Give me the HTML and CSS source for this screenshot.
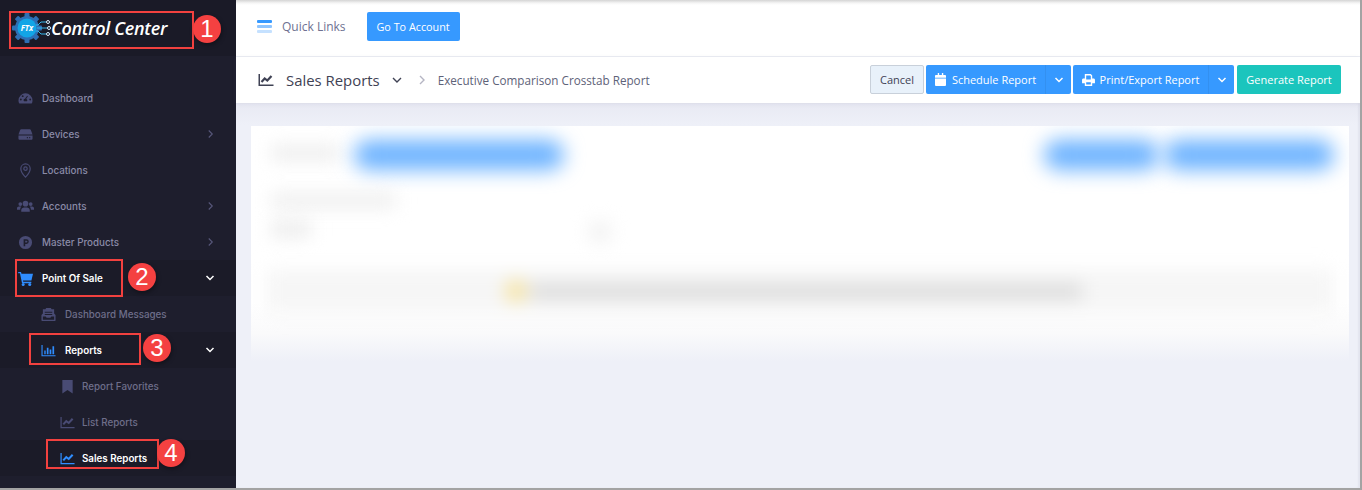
FILE: index.html
```html
<!DOCTYPE html>
<html lang="en">
<head>
<meta charset="utf-8">
<title>Sales Reports</title>
<link rel="stylesheet" href="styles.css">
</head>
<body>
<div class="window">
  <aside class="sidebar">
    <div class="brand">
      <svg class="logo-mark" width="40" height="36" viewBox="0 0 40 36">
        <g fill="#2d6fb5">
          <circle cx="16" cy="17" r="12"/>
          <rect x="13.500" y="2" width="5" height="30" rx="1"/>
          <rect x="1" y="14.500" width="30" height="5" rx="1"/>
          <rect x="13.500" y="2" width="5" height="30" rx="1" transform="rotate(45 16 17)"/>
          <rect x="13.500" y="2" width="5" height="30" rx="1" transform="rotate(-45 16 17)"/>
        </g>
        <circle cx="16" cy="17" r="9.500" fill="#12a5e6"/>
        <g stroke="#35b5ea" stroke-width="1" fill="none">
          <path d="M25 14h2l3-3h5"/><path d="M26 17h10"/><path d="M25 20h2l3 3h5"/>
        </g>
        <g fill="#1a1a27" stroke="#d8f1ff" stroke-width="1">
          <circle cx="37" cy="11" r="1.500"/><circle cx="38" cy="17" r="1.500"/><circle cx="37" cy="23" r="1.500"/>
        </g>
        <text x="16" y="20" class="logo-ftx" text-anchor="middle">FTx</text>
      </svg>
      <span class="brand-name">Control Center</span>
    </div>
    <nav class="menu">
      <a class="item">
        <svg class="ico" viewBox="0 0 16 16"><path class="fill-dim" d="M8 2.500a7.500 7.500 0 0 0-7.500 7.500c0 1.300.3 2.300.9 3.300h13.200c.6-1 .9-2 .9-3.300A7.500 7.500 0 0 0 8 2.500zM3 10a1 1 0 1 1 0-2 1 1 0 0 1 0 2zm2-3.500a1 1 0 1 1 0-2 1 1 0 0 1 0 2zM9.500 11h-3a1.500 1.500 0 0 1 .9-2.700L9.800 5l.8.500-1.900 3a1.500 1.500 0 0 1 .8 2.500zM13 10a1 1 0 1 1 0-2 1 1 0 0 1 0 2z"/></svg>
        <span>Dashboard</span>
      </a>
      <a class="item">
        <svg class="ico" viewBox="0 0 16 16"><path class="fill-dim" d="M3.500 2.500h9c.6 0 1 .3 1.200.8L15.500 8h-15l1.800-4.700c.2-.5.600-.8 1.200-.8zM.500 9h15v3.500c0 .6-.4 1-1 1h-13c-.6 0-1-.4-1-1zm12 1.700a.7.700 0 1 0 0 1.400.7.700 0 0 0 0-1.400zm-2.500 0a.7.700 0 1 0 0 1.400.7.700 0 0 0 0-1.400z"/></svg>
        <span>Devices</span>
        <svg class="caret" viewBox="0 0 8 10"><path d="M2 1l4 4-4 4"/></svg>
      </a>
      <a class="item">
        <svg class="ico" viewBox="0 0 16 16"><path class="line-dim" d="M8 15S3 9.800 3 6a5 5 0 0 1 10 0c0 3.800-5 9-5 9z"/><circle class="line-dim" cx="8" cy="6" r="1.800"/></svg>
        <span>Locations</span>
      </a>
      <a class="item">
        <svg class="ico wide" viewBox="0 0 18 14"><g class="fill-dim"><circle cx="9" cy="4.500" r="3"/><circle cx="3.500" cy="5" r="2"/><circle cx="14.500" cy="5" r="2"/><path d="M4.500 13v-1.500C4.500 9.500 6 8.500 7.500 8.500h3c1.500 0 3 1 3 3V13zM0 11V9.500C0 8.300 1 7.500 2 7.500h2.500C3.700 8.300 3.300 9.500 3.300 11zM18 11V9.500c0-1.200-1-2-2-2h-2.500c.8.800 1.200 2 1.200 3.500z"/></g></svg>
        <span>Accounts</span>
        <svg class="caret" viewBox="0 0 8 10"><path d="M2 1l4 4-4 4"/></svg>
      </a>
      <a class="item">
        <svg class="ico" viewBox="0 0 16 16"><path class="fill-dim" fill-rule="evenodd" d="M8 1a7 7 0 1 1 0 14A7 7 0 0 1 8 1zM6 4.500V12h1.700V9.500H9a2.500 2.500 0 0 0 0-5zm1.700 1.500H9a1 1 0 0 1 0 2H7.700z"/></svg>
        <span>Master Products</span>
        <svg class="caret" viewBox="0 0 8 10"><path d="M2 1l4 4-4 4"/></svg>
      </a>
      <a class="item active">
        <svg class="ico" viewBox="0 0 16 16"><path class="fill-blue" d="M.200 1h3l.5 2H16l-1.700 7.200H5.300l.3 1.300h8.600v1.500H4.300L2.100 2.500H.200z"/><circle class="fill-blue" cx="5.500" cy="14.300" r="1.600"/><circle class="fill-blue" cx="12.500" cy="14.300" r="1.600"/></svg>
        <span>Point Of Sale</span>
        <svg class="chev" viewBox="0 0 10 8"><path d="M1.500 2l3.500 3.500L8.500 2"/></svg>
      </a>
      <a class="item sub">
        <svg class="ico" viewBox="0 0 16 16"><path class="fill-dim" fill-rule="evenodd" d="M5.500 1h5l.8 1.500H14V7l1.500 1.500V14c0 .6-.4 1-1 1h-13c-.6 0-1-.4-1-1V8.500L2 7V2.500h2.700zM4 5v1h8V5zm0 2.500v1h8v-1zM2 10v3.500h12V10h-3l-1 1.500H6L5 10z"/></svg>
        <span>Dashboard Messages</span>
      </a>
      <a class="item sub current">
        <svg class="ico" viewBox="0 0 16 16"><path class="fill-blue" d="M.500 2h1.200v11h13.800v1.200H.500zM3.500 8h1.500v4H3.500zM6.200 5H8v7H6.200zM9.200 7H11v5H9.200zM12.200 3.500H14V12h-1.800z"/></svg>
        <span class="strong">Reports</span>
        <svg class="chev" viewBox="0 0 10 8"><path d="M1.500 2l3.500 3.500L8.500 2"/></svg>
      </a>
      <a class="item subsub">
        <svg class="ico" viewBox="0 0 16 16"><path class="fill-dim" d="M2.500 1h11v14.500L8 11.700l-5.500 3.800z"/></svg>
        <span>Report Favorites</span>
      </a>
      <a class="item subsub">
        <svg class="ico" viewBox="0 0 16 16"><path class="fill-dim" d="M.500 2h1.300v10.700h13.700V14H.500z"/><path class="line-dim thick" d="M3.500 10l3.200-3.500 2.600 2L13.500 4"/></svg>
        <span>List Reports</span>
      </a>
      <a class="item subsub current">
        <svg class="ico" viewBox="0 0 16 16"><path class="fill-blue" d="M.500 2h1.300v10.700h13.700V14H.500z"/><path class="line-blue thick" d="M3.500 10l3.200-3.500 2.600 2L13.500 4"/></svg>
        <span class="strong">Sales Reports</span>
      </a>
    </nav>
  </aside>

  <main class="main">
    <header class="topbar">
      <svg class="quick-ico" viewBox="0 0 15 13"><rect y="0" width="15" height="3" rx="1" fill="#3699ff"/><rect y="5" width="15" height="3" rx="1" fill="#8fc5ff"/><rect y="10" width="15" height="3" rx="1" fill="#c5e1ff"/></svg>
      <span class="quick-label">Quick Links</span>
      <button class="btn blue go">Go To Account</button>
    </header>
    <section class="subheader">
      <svg class="title-ico" viewBox="0 0 16 16"><path d="M.500 2h1.500v10.500h13.500V14H.500z"/><path class="title-line" d="M3.500 10l3.200-3.500 2.600 2L13.500 4"/></svg>
      <h1 class="title">Sales Reports</h1>
      <svg class="title-chev" viewBox="0 0 10 8"><path d="M1 2l4 4 4-4"/></svg>
      <svg class="crumb-sep" viewBox="0 0 8 10"><path d="M2 1l4 4-4 4"/></svg>
      <span class="crumb">Executive Comparison Crosstab Report</span>
      <div class="actions">
        <button class="btn cancel">Cancel</button>
        <div class="split w-schedule">
          <button class="btn blue grow"><svg class="btn-ico" viewBox="0 0 12 14"><path d="M3 0h1.500v2h3V0H9v2h2c.6 0 1 .4 1 1v2H0V3c0-.6.4-1 1-1h2zM0 6h12v7c0 .6-.4 1-1 1H1c-.6 0-1-.4-1-1z"/></svg>Schedule Report</button>
          <button class="btn blue drop"><svg viewBox="0 0 10 8"><path d="M1.500 2l3.500 3.500L8.500 2"/></svg></button>
        </div>
        <div class="split w-print">
          <button class="btn blue grow"><svg class="btn-ico print" viewBox="0 0 14 13"><path fill-rule="evenodd" d="M3 0h6.500L11 1.500V5h1.500c.8 0 1.500.7 1.500 1.500V10h-3v3H3v-3H0V6.500C0 5.700.7 5 1.500 5H3zm1.500 1.500V6h5V2.300l-.8-.8zM4.500 9v2.500h5V9z"/></svg>Print/Export Report</button>
          <button class="btn blue drop"><svg viewBox="0 0 10 8"><path d="M1.500 2l3.500 3.500L8.500 2"/></svg></button>
        </div>
        <button class="btn teal">Generate Report</button>
      </div>
    </section>
    <section class="content">
      <div class="card">
        <div class="blur-row top">
          <div class="ghost label"></div>
          <div class="pill left"></div>
          <div class="spacer"></div>
          <div class="pill r1"></div>
          <div class="pill r2"></div>
        </div>
        <div class="blur-row mid">
          <div class="ghost-stack">
            <div class="ghost l1"></div>
            <div class="ghost l2"></div>
          </div>
          <div class="ghost dot"></div>
        </div>
        <div class="notice">
          <div class="warn"></div>
          <div class="notice-text"></div>
        </div>
      </div>
    </section>
  </main>

  <div class="mark box1"></div><div class="num n1">1</div>
  <div class="mark box2"></div><div class="num n2">2</div>
  <div class="mark box3"></div><div class="num n3">3</div>
  <div class="mark box4"></div><div class="num n4">4</div>
</div>
</body>
</html>
```

FILE: styles.css
```css
* { box-sizing: border-box; }
html, body { margin: 0; height: 100%; }
body { font-family: "Open Sans", "Liberation Sans", sans-serif; background: #fff; overflow: hidden; }

.window {
  position: relative;
  display: flex;
  width: 1362px;
  height: 490px;
  border-right: 2px solid #a3a3a3;
  border-bottom: 2px solid #a3a3a3;
  overflow: hidden;
}

/* Sidebar */
.sidebar { width: 236px; flex: none; background: #1e1e2d; display: flex; flex-direction: column; }
.brand { height: 56px; flex: none; background: #1a1a27; display: flex; align-items: center; padding: 0 0 0 11px; }
.logo-mark { flex: none; margin-top: 1px; }
.logo-ftx { font: italic 700 8px "Open Sans", sans-serif; fill: #fff; }
.brand-name { font: italic 600 18px "Open Sans", sans-serif; color: #fff; letter-spacing: -.3px; white-space: nowrap; }
.menu { padding-top: 24px; display: flex; flex-direction: column; }

.item { height: 36px; display: flex; align-items: center; padding: 0 22px 0 18px; color: #8b8ba8; font: 500 9.800px "Inter", "Open Sans", sans-serif; }
.item span { white-space: nowrap; }
.item.sub { padding-left: 41px; color: #6e6e8a; }
.item.subsub { padding-left: 60px; color: #6e6e8a; }
.item.active, .item.subsub.current { background: #1b1b28; color: #fff; font-weight: 600; }
.item.sub.current { background: #1b1b28; }
.strong { color: #fff; font-weight: 600; }
.ico { width: 15px; height: 15px; flex: none; margin-right: 9px; }
.ico.wide { width: 17px; height: 14px; margin-left: -1px; margin-right: 8px; }
.item.subsub .ico { margin-right: 7px; }
.fill-dim { fill: #494b74; }
.line-dim { fill: none; stroke: #494b74; stroke-width: 1.300; }
.fill-blue { fill: #2f8dff; }
.line-blue { fill: none; stroke: #2f8dff; }
.line-dim.thick, .line-blue.thick { stroke-width: 2.200; }
.caret { width: 7px; height: 10px; margin-left: auto; fill: none; stroke: #57577a; stroke-width: 1.300; }
.chev { width: 10px; height: 8px; margin-left: auto; margin-right: -1px; fill: none; stroke: #fff; stroke-width: 1.500; }

/* Main */
.main { flex: 1; min-width: 0; display: flex; flex-direction: column; background: #eef0f8; }
.topbar { height: 57px; flex: none; background: linear-gradient(#d4d4d4, #f5f5f5 3px, #fff 5px); border-bottom: 1px solid #ebedf3; display: flex; align-items: center; padding: 0 0 4px 21px; }
.quick-ico { width: 15px; height: 13px; flex: none; }
.quick-label { font-size: 12px; color: #6e7191; margin-left: 10px; margin-right: 21px; }
.btn { font: 400 11px "Open Sans", sans-serif; border: 0; border-radius: 2px; height: 29px; padding: 0; color: #fff; display: flex; align-items: center; justify-content: center; white-space: nowrap; }
.blue { background: #3699ff; }
.teal { background: #1bc5bd; width: 104px; margin-left: 1px; }
.go { width: 93px; font-size: 10.800px; }

.subheader { height: 46px; flex: none; background: #fff; display: flex; align-items: center; padding: 0 19px 1px 22px; box-shadow: 0 1px 4px rgba(120, 120, 160, .1); position: relative; }
.title-ico { width: 16px; height: 16px; flex: none; fill: #3f4254; }
.title-line { fill: none; stroke: #3f4254; stroke-width: 2.200; }
.title { margin: 0 0 0 12px; font-size: 14.900px; font-weight: 400; color: #3f4254; white-space: nowrap; }
.title-chev { width: 10px; height: 8px; margin-left: 12px; fill: none; stroke: #3f4254; stroke-width: 1.400; flex: none; }
.crumb-sep { width: 8px; height: 10px; margin-left: 16px; fill: none; stroke: #b5b5c3; stroke-width: 1.400; flex: none; }
.crumb { font-size: 11.700px; color: #5e6278; margin-left: 12px; white-space: nowrap; }
.actions { margin-left: auto; display: flex; gap: 2px; }
.cancel { width: 54px; background: #e8f1fa; border: 1px solid #c8d0da; color: #3f4254; }
.split { display: flex; }
.split .grow { flex: 1; border-radius: 2px 0 0 2px; }
.drop { width: 26px; border-radius: 0 2px 2px 0; border-left: 1px solid #3390f0; }
.drop svg { width: 10px; height: 8px; fill: none; stroke: #fff; stroke-width: 1.500; }
.w-schedule { width: 145px; }
.w-print { width: 161px; }
.btn-ico { width: 11px; height: 13px; fill: #fff; margin-right: 6px; flex: none; }
.btn-ico.print { width: 13px; height: 12px; margin-right: 5px; }

/* Blurred card */
.content { flex: 1; padding: 23px 11px 0 15px; background: linear-gradient(#e8e9f3, #eef0f8 22px); box-shadow: inset -2px 0 2px rgba(60, 60, 100, .06); }
.card { height: 235px; background: linear-gradient(#fff 0, #fff 75%, #fafafb 88%, #eef0f8 100%); overflow: hidden; position: relative; }
.blur-row { display: flex; }
.blur-row.top { height: 60px; padding: 10px 15px 0 20px; align-items: flex-start; }
.ghost { background: #ececec; filter: blur(9px); }
.ghost.label { width: 68px; height: 14px; margin-top: 10px; margin-right: 15px; }
.pill { height: 30px; background: #6db3ff; filter: blur(10px); border-radius: 15px; }
.pill.left { width: 210px; margin-top: 4px; }
.spacer { flex: 1; }
.pill.r1 { width: 115px; margin-top: 4px; }
.pill.r2 { width: 170px; margin-top: 4px; margin-left: 5px; }
.blur-row.mid { height: 75px; padding: 8px 0 0 20px; }
.ghost-stack { width: 310px; display: flex; flex-direction: column; gap: 14px; }
.ghost.l1 { width: 125px; height: 13px; }
.ghost.l2 { width: 40px; height: 16px; }
.ghost.dot { width: 22px; height: 22px; border-radius: 50%; background: #f0f0f0; margin: 27px 0 0 8px; }
.notice { margin: 8px 16px 0 16px; height: 44px; background: #f6f6f6; filter: blur(9px); display: flex; align-items: center; padding-left: 238px; position: relative; }
.warn { width: 22px; height: 22px; background: #f6e3a0; border-radius: 50%; flex: none; }
.notice-text { width: 552px; height: 15px; background: #dadada; margin-left: 3px; }

/* Annotations */
.mark { position: absolute; border: 2px solid #f2413f; }
.box1 { left: 9px; top: 11px; width: 185px; height: 38px; }
.box2 { left: 15px; top: 259px; width: 108px; height: 38px; }
.box3 { left: 29px; top: 333px; width: 112px; height: 32px; }
.box4 { left: 46px; top: 439px; width: 113px; height: 30px; }
.num { position: absolute; width: 28px; height: 28px; border-radius: 50%; background: #f44141; color: #fff; font: 400 24px/28px "Liberation Sans", sans-serif; text-align: center; box-shadow: 1px 2px 4px rgba(0, 0, 0, .35); }
.n1 { left: 193px; top: 15px; }
.n2 { left: 128px; top: 263px; }
.n3 { left: 143px; top: 334px; }
.n4 { left: 157px; top: 439px; }
```
